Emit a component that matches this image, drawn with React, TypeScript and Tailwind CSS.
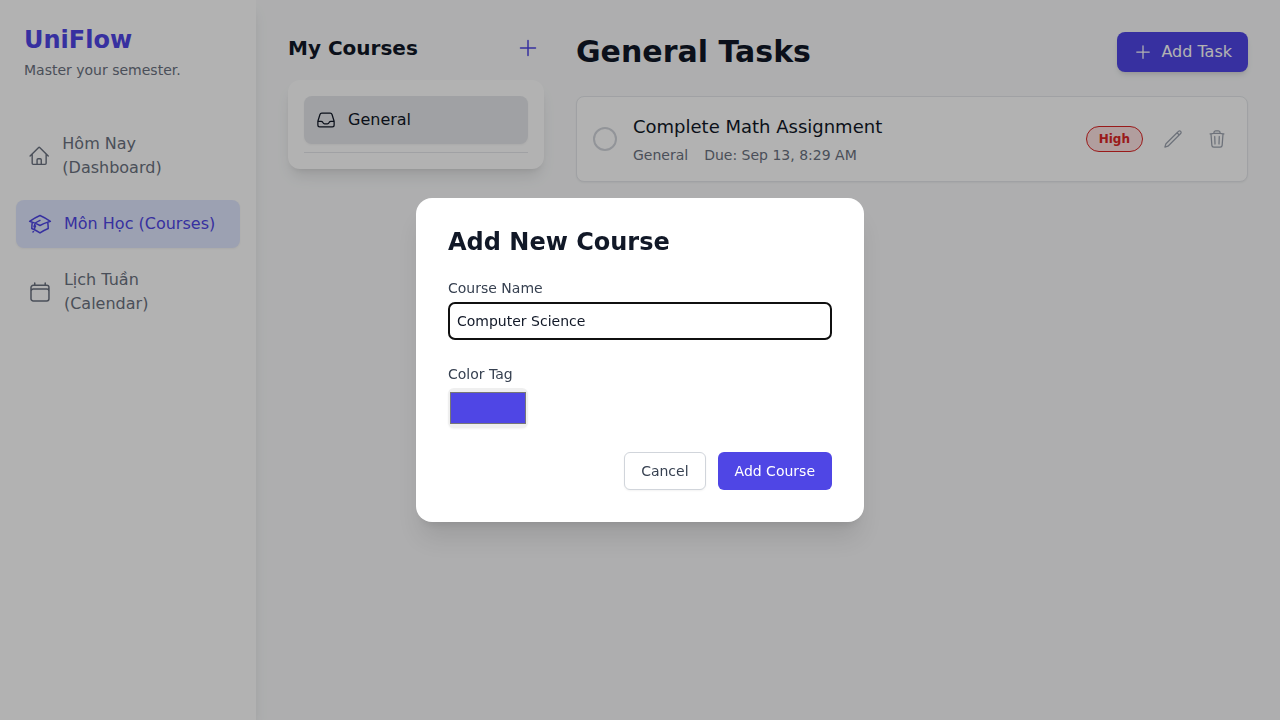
import type { ReactNode } from "react";

function Icon({ d, className }: { d: string; className: string }) {
  return (
    <svg className={className} viewBox="0 0 24 24" fill="none" stroke="currentColor" strokeWidth={1.5} strokeLinecap="round" strokeLinejoin="round">
      <path d={d} />
    </svg>
  );
}

const paths = {
  home: "m2.25 12 8.954-8.955c.44-.439 1.152-.439 1.591 0L21.75 12M4.5 9.75v10.125c0 .621.504 1.125 1.125 1.125H9.75v-4.875c0-.621.504-1.125 1.125-1.125h2.25c.621 0 1.125.504 1.125 1.125V21h4.125c.621 0 1.125-.504 1.125-1.125V9.75M8.25 21h8.25",
  cap: "M4.26 10.147a60.438 60.438 0 0 0-.491 6.347A48.62 48.62 0 0 1 12 20.904a48.62 48.62 0 0 1 8.232-4.41 60.46 60.46 0 0 0-.491-6.347m-15.482 0a50.636 50.636 0 0 0-2.658-.813A59.906 59.906 0 0 1 12 3.493a59.903 59.903 0 0 1 10.399 5.84c-.896.248-1.783.52-2.658.814m-15.482 0A50.717 50.717 0 0 1 12 13.489a50.702 50.702 0 0 1 7.74-3.342M6.75 15a.75.75 0 1 0 0-1.5.75.75 0 0 0 0 1.5Zm0 0v-3.675A55.378 55.378 0 0 1 12 8.443m-7.007 11.55A5.981 5.981 0 0 0 6.75 15.75v-1.5",
  calendar: "M6.75 3v2.25M17.25 3v2.25M3 18.75V7.5a2.25 2.25 0 0 1 2.25-2.25h13.5A2.25 2.25 0 0 1 21 7.5v11.25m-18 0A2.25 2.25 0 0 0 5.25 21h13.5A2.25 2.25 0 0 0 21 18.75m-18 0v-7.5A2.25 2.25 0 0 1 5.25 9h13.5A2.25 2.25 0 0 1 21 11.25v7.5",
  inbox: "M2.25 13.5h3.86a2.25 2.25 0 0 1 2.012 1.244l.256.512a2.25 2.25 0 0 0 2.013 1.244h3.218a2.25 2.25 0 0 0 2.013-1.244l.256-.512a2.25 2.25 0 0 1 2.013-1.244h3.859m-19.5.338V18a2.25 2.25 0 0 0 2.25 2.25h15A2.25 2.25 0 0 0 21.75 18v-4.162c0-.224-.034-.447-.1-.661L19.24 5.338a2.25 2.25 0 0 0-2.15-1.588H6.911a2.25 2.25 0 0 0-2.15 1.588L2.35 13.177a2.25 2.25 0 0 0-.1.661Z",
  plus: "M12 4.5v15m7.5-7.5h-15",
  pencil: "m16.862 4.487 1.687-1.688a1.875 1.875 0 1 1 2.652 2.652L6.832 19.82a4.5 4.5 0 0 1-1.897 1.13l-2.685.8.8-2.685a4.5 4.5 0 0 1 1.13-1.897L16.863 4.487Zm0 0L19.5 7.125",
  trash: "m14.74 9-.346 9m-4.788 0L9.26 9m9.968-3.21c.342.052.682.107 1.022.166m-1.022-.165L18.16 19.673a2.25 2.25 0 0 1-2.244 2.077H8.084a2.25 2.25 0 0 1-2.244-2.077L4.772 5.79m14.456 0a48.108 48.108 0 0 0-3.478-.397m-12 .562c.34-.059.68-.114 1.022-.165m0 0a48.11 48.11 0 0 1 3.478-.397m7.5 0v-.916c0-1.18-.91-2.164-2.09-2.201a51.964 51.964 0 0 0-3.32 0c-1.18.037-2.09 1.022-2.09 2.201v.916m7.5 0a48.667 48.667 0 0 0-7.5 0",
};

function NavItem({ icon, active, children }: { icon: string; active?: boolean; children: ReactNode }) {
  return (
    <a className={active ? "flex items-center rounded-lg bg-[#e0e7ff] p-3 font-medium text-[#4f46e5] shadow-xs" : "flex items-center rounded-lg p-3 font-medium text-[#6b7280]"}>
      <Icon d={icon} className="mr-3 h-6 w-6" />
      <span>{children}</span>
    </a>
  );
}

function Sidebar() {
  return (
    <aside className="z-0 w-64 shrink-0 bg-white shadow-lg">
      <div className="p-6">
        <h1 className="text-2xl font-bold text-[#4f46e5]">UniFlow</h1>
        <p className="mt-1 text-sm text-[#6b7280]">Master your semester.</p>
      </div>
      <nav className="flex flex-col gap-2 p-4">
        <NavItem icon={paths.home}>Hôm Nay (Dashboard)</NavItem>
        <NavItem icon={paths.cap} active>Môn Học (Courses)</NavItem>
        <NavItem icon={paths.calendar}>Lịch Tuần (Calendar)</NavItem>
      </nav>
    </aside>
  );
}

function CourseList() {
  return (
    <section className="w-64 shrink-0">
      <div className="mb-4 flex items-center justify-between">
        <h2 className="text-xl font-bold text-[#111827]">My Courses</h2>
        <button className="p-1 text-[#4f46e5]"><Icon d={paths.plus} className="h-6 w-6" /></button>
      </div>
      <div className="rounded-xl bg-white p-4 shadow-lg">
        <div className="flex items-center gap-3 rounded-lg bg-[#e5e7eb] p-3 font-medium text-[#111827] shadow-xs">
          <Icon d={paths.inbox} className="h-5 w-5" />
          <span>General</span>
        </div>
        <div className="mt-2 border-t border-[#e5e7eb]" />
      </div>
    </section>
  );
}

function Tasks() {
  return (
    <main className="min-w-0 flex-1">
      <div className="mb-6 flex items-center justify-between">
        <h2 className="text-3xl font-bold text-[#111827]">General Tasks</h2>
        <button className="flex items-center rounded-lg bg-[#4f46e5] px-4 py-2 font-medium text-white shadow-md">
          <Icon d={paths.plus} className="mr-2 h-5 w-5" />
          Add Task
        </button>
      </div>
      <div className="flex items-center rounded-lg border border-[#e5e7eb] bg-white p-4 shadow-xs">
        <div className="mr-4 h-6 w-6 rounded-full border-2 border-[#d1d5db]" />
        <div className="flex-1">
          <p className="text-lg font-medium text-[#111827]">Complete Math Assignment</p>
          <div className="mt-1 flex gap-4 text-sm text-[#6b7280]">
            <span>General</span>
            <span>Due: Sep 13, 8:29 AM</span>
          </div>
        </div>
        <div className="flex items-center gap-4 text-[#9ca3af]">
          <span className="rounded-full border border-[#dc2626] bg-[#fee2e2] px-3 py-1 text-xs font-bold text-[#dc2626]">High</span>
          <button className="p-1"><Icon d={paths.pencil} className="h-5 w-5" /></button>
          <button className="p-1"><Icon d={paths.trash} className="h-5 w-5" /></button>
        </div>
      </div>
    </main>
  );
}

function CourseModal() {
  return (
    <div className="fixed inset-0 z-10 flex items-center justify-center bg-black/30">
      <div className="w-full max-w-md rounded-2xl bg-white p-8 shadow-xl will-change-transform">
        <h3 className="text-2xl leading-6 font-bold text-[#111827]">Add New Course</h3>
        <label className="mt-6 block text-sm font-medium text-[#374151]">Course Name</label>
        <input
          type="text"
          defaultValue="Computer Science"
          className="mt-1 block h-[38px] w-full rounded-[7px] border-2 border-[#101010] px-[7px] text-sm text-[#111827] outline-none"
        />
        <label className="mt-6 block text-sm font-medium text-[#374151]">Color Tag</label>
        <div className="mt-1 h-10 w-20 rounded-md bg-[#efefef] px-0.5 py-1 shadow-xs">
          <div className="h-full border border-[#777777] bg-[#4f46e5]" />
        </div>
        <div className="mt-6 flex justify-end gap-3 text-sm font-medium">
          <button className="rounded-md border border-[#d1d5db] bg-white px-4 py-2 text-[#374151] shadow-xs">Cancel</button>
          <button className="rounded-md border border-transparent bg-[#4f46e5] px-4 py-2 text-white">Add Course</button>
        </div>
      </div>
    </div>
  );
}

export default function App() {
  return (
    <div className="flex h-screen overflow-hidden bg-[#f9fafb] font-['DejaVu_Sans',sans-serif]">
      <Sidebar />
      <div className="flex min-w-0 flex-1 gap-8 p-8">
        <CourseList />
        <Tasks />
      </div>
      <CourseModal />
    </div>
  );
}
